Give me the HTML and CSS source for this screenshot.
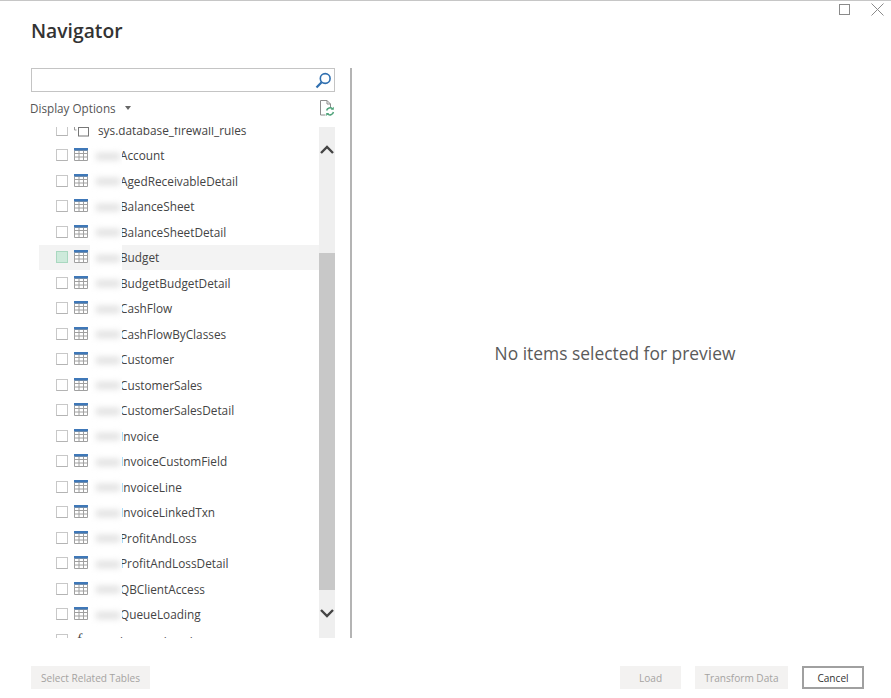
FILE: index.html
```html
<!DOCTYPE html>
<html lang="en">
<head>
<meta charset="utf-8">
<title>Navigator</title>
<link rel="stylesheet" href="styles.css">
</head>
<body>
<svg class="defs" width="0" height="0" aria-hidden="true">
  <symbol id="tbl" viewBox="0 0 14 13">
    <rect x="0" y="0" width="14" height="13" fill="#fff"/>
    <path d="M.5 2.500h13v10H.5z M.5 5.500h13 M.5 9h13 M5 2.500v10 M9.500 2.500v10" fill="none" stroke="#a0a0a0" stroke-width="1"/>
    <rect x="0" y="0" width="14" height="2.500" fill="#3f78b8"/>
  </symbol>
</svg>
<div class="window-controls">
  <svg class="ctl" width="11" height="11" viewBox="0 0 11 11"><rect x=".5" y=".5" width="10" height="10" fill="none" stroke="#8a8a8a"/></svg>
  <svg class="ctl" width="13" height="13" viewBox="0 0 13 13"><path d="M.5.5l12 12M12.500.5l-12 12" stroke="#8a8a8a" fill="none"/></svg>
</div>
<h1 class="title">Navigator</h1>
<main class="content">
  <section class="left">
    <div class="search">
      <svg width="17" height="17" viewBox="0 0 17 17"><circle cx="10.200" cy="6.500" r="4.900" fill="none" stroke="#2f6fb0" stroke-width="1.600"/><path d="M6.600 10.200L1.500 15.500" stroke="#2f6fb0" stroke-width="2.200" fill="none"/></svg>
    </div>
    <div class="options">
      <span class="options-label">Display Options</span>
      <span class="caret"></span>
      <svg class="refresh" width="16" height="17" viewBox="0 0 16 17"><path d="M1.500.5h6.500l3.500 3.500v4 M8 .5v3.500h3.500 M1.500.5v14.500h5" fill="none" stroke="#8c8c8c"/><path d="M7.600 10.500a3.500 3.500 0 0 1 6-1.500 M14.400 12a3.500 3.500 0 0 1-6 1.800" fill="none" stroke="#4fa37a" stroke-width="1.500"/><path d="M14.800 6.800v3h-3z M7.200 16v-3h3z" fill="#4fa37a"/></svg>
    </div>
    <div class="list-wrap">
      <div class="list">
        <div class="rows">
          <div class="row"><span class="check"></span><svg class="view-ic" width="16" height="14" viewBox="0 0 16 14"><path d="M.5 2v5h2" fill="none" stroke="#9a9a9a"/><rect x="4.500" y="4.500" width="10" height="8.500" fill="none" stroke="#777"/></svg><span class="name plain">sys.database_firewall_rules</span></div>
          <div class="row"><span class="check"></span><svg class="ic" width="14" height="13"><use href="#tbl"/></svg><span class="name">Account</span><span class="mask"><i></i></span></div>
          <div class="row"><span class="check"></span><svg class="ic" width="14" height="13"><use href="#tbl"/></svg><span class="name">AgedReceivableDetail</span><span class="mask"><i></i></span></div>
          <div class="row"><span class="check"></span><svg class="ic" width="14" height="13"><use href="#tbl"/></svg><span class="name">BalanceSheet</span><span class="mask"><i></i></span></div>
          <div class="row"><span class="check"></span><svg class="ic" width="14" height="13"><use href="#tbl"/></svg><span class="name">BalanceSheetDetail</span><span class="mask"><i></i></span></div>
          <div class="row hover"><span class="check on"></span><svg class="ic" width="14" height="13"><use href="#tbl"/></svg><span class="name">Budget</span><span class="mask"><i></i></span></div>
          <div class="row"><span class="check"></span><svg class="ic" width="14" height="13"><use href="#tbl"/></svg><span class="name">BudgetBudgetDetail</span><span class="mask"><i></i></span></div>
          <div class="row"><span class="check"></span><svg class="ic" width="14" height="13"><use href="#tbl"/></svg><span class="name">CashFlow</span><span class="mask"><i></i></span></div>
          <div class="row"><span class="check"></span><svg class="ic" width="14" height="13"><use href="#tbl"/></svg><span class="name">CashFlowByClasses</span><span class="mask"><i></i></span></div>
          <div class="row"><span class="check"></span><svg class="ic" width="14" height="13"><use href="#tbl"/></svg><span class="name">Customer</span><span class="mask"><i></i></span></div>
          <div class="row"><span class="check"></span><svg class="ic" width="14" height="13"><use href="#tbl"/></svg><span class="name">CustomerSales</span><span class="mask"><i></i></span></div>
          <div class="row"><span class="check"></span><svg class="ic" width="14" height="13"><use href="#tbl"/></svg><span class="name">CustomerSalesDetail</span><span class="mask"><i></i></span></div>
          <div class="row"><span class="check"></span><svg class="ic" width="14" height="13"><use href="#tbl"/></svg><span class="name">Invoice</span><span class="mask"><i></i></span></div>
          <div class="row"><span class="check"></span><svg class="ic" width="14" height="13"><use href="#tbl"/></svg><span class="name">InvoiceCustomField</span><span class="mask"><i></i></span></div>
          <div class="row"><span class="check"></span><svg class="ic" width="14" height="13"><use href="#tbl"/></svg><span class="name">InvoiceLine</span><span class="mask"><i></i></span></div>
          <div class="row"><span class="check"></span><svg class="ic" width="14" height="13"><use href="#tbl"/></svg><span class="name">InvoiceLinkedTxn</span><span class="mask"><i></i></span></div>
          <div class="row"><span class="check"></span><svg class="ic" width="14" height="13"><use href="#tbl"/></svg><span class="name">ProfitAndLoss</span><span class="mask"><i></i></span></div>
          <div class="row"><span class="check"></span><svg class="ic" width="14" height="13"><use href="#tbl"/></svg><span class="name">ProfitAndLossDetail</span><span class="mask"><i></i></span></div>
          <div class="row"><span class="check"></span><svg class="ic" width="14" height="13"><use href="#tbl"/></svg><span class="name">QBClientAccess</span><span class="mask"><i></i></span></div>
          <div class="row"><span class="check"></span><svg class="ic" width="14" height="13"><use href="#tbl"/></svg><span class="name">QueueLoading</span><span class="mask"><i></i></span></div>
          <div class="row last"><span class="check"></span><span class="fn">f</span><span class="name">impressions in</span></div>
        </div>
      </div>
      <div class="scrollbar">
        <div class="arrow"><svg width="14" height="9" viewBox="0 0 14 9"><path d="M1 8l6-6 6 6" fill="none" stroke="#444" stroke-width="2.400"/></svg></div>
        <div class="thumb"></div>
        <div class="arrow down"><svg width="14" height="9" viewBox="0 0 14 9"><path d="M1 1l6 6 6-6" fill="none" stroke="#444" stroke-width="2.400"/></svg></div>
      </div>
    </div>
  </section>
  <section class="preview">No items selected for preview</section>
</main>
<footer class="footer">
  <button class="btn disabled related">Select Related Tables</button>
  <span class="spacer"></span>
  <button class="btn disabled load">Load</button>
  <button class="btn disabled transform">Transform Data</button>
  <button class="btn cancel">Cancel</button>
</footer>
</body>
</html>
```
FILE: styles.css
```css
* { box-sizing: border-box; }
html, body { height: 100%; }
body {
  margin: 0;
  height: 698px;
  overflow: hidden;
  background: #fff;
  border-top: 1px solid #c6c6c6;
  font-family: "Open Sans", "Noto Sans", sans-serif;
  color: #444;
  display: flex;
  flex-direction: column;
  position: relative;
}
.defs { position: absolute; }
.window-controls {
  position: absolute;
  top: 2px;
  right: 7px;
  display: flex;
  align-items: center;
  gap: 21px;
}
.title {
  margin: 15px 0 0 31px;
  font-size: 19.300px;
  line-height: 29px;
  font-weight: 600;
  color: #333;
}
.content {
  display: flex;
  margin: 23px 0 0 31px;
  height: 570px;
}
.left {
  width: 304px;
  display: flex;
  flex-direction: column;
}
.search {
  height: 24px;
  border: 1px solid #c4c4c4;
  display: flex;
  align-items: center;
  justify-content: flex-end;
  padding-right: 2px;
}
.options {
  height: 31px;
  margin: 0 0 4px -1px;
  display: flex;
  align-items: center;
  font-size: 11.700px;
  color: #555;
}
.caret {
  margin-left: 9px;
  border-left: 3.500px solid transparent;
  border-right: 3.500px solid transparent;
  border-top: 4px solid #666;
}
.refresh { margin: 2px 0 0 auto; }
.list-wrap {
  flex: 1;
  display: flex;
  min-height: 0;
}
.list {
  flex: 1;
  overflow: hidden;
  padding-left: 8px;
}
.rows { margin-top: -10px; }
.row {
  height: 25.500px;
  display: flex;
  align-items: center;
  padding-left: 17px;
  position: relative;
  font-size: 11.800px;
}
.row.hover { background: #f3f3f3; }
.check {
  width: 12px;
  height: 12px;
  border: 1px solid #c8c8c8;
  border-bottom-color: #b4b4b4;
  background: #fff;
  flex: none;
}
.check.on { background: #cdeadb; border-color: #a9d8c0; }
.ic { margin: -1px 0 0 6px; flex: none; }
.view-ic { margin-left: 6px; flex: none; }
.fn {
  width: 14px;
  margin-left: 6px;
  padding-left: 3px;
  font-family: "Liberation Serif", serif;
  font-style: italic;
  font-size: 14px;
}
.name { margin-left: 32px; white-space: nowrap; color: #444; }
.name.plain { margin-left: 8px; }
.last .name { margin-top: 3px; }
.mask {
  position: absolute;
  left: 51px;
  top: 0;
  width: 32px;
  height: 26px;
  background: #fff;
  overflow: hidden;
}
.mask i {
  display: block;
  margin: 10px 0 0 6px;
  width: 24px;
  height: 7px;
  background: #e0e0e0;
  filter: blur(3px);
}
.scrollbar {
  width: 16px;
  background: #efefef;
  display: flex;
  flex-direction: column;
}
.arrow {
  height: 44px;
  display: flex;
  justify-content: center;
  align-items: center;
  flex: none;
}
.thumb {
  height: 337px;
  margin-top: 82px;
  background: #c8c8c8;
  flex: none;
}
.arrow.down { height: 47px; }
.preview {
  margin-left: 15px;
  flex: 1;
  border-left: 2px solid #b4b4b4;
  display: flex;
  align-items: center;
  justify-content: center;
  font-size: 17.400px;
  color: #5a5a5a;
  padding: 0 13px 0 0;
  height: 570px;
}
.footer {
  display: flex;
  margin: 28px 27px 0 31px;
  gap: 14px;
}
.spacer { flex: 1; }
.btn {
  height: 23px;
  padding: 0;
  border: 0;
  font-family: inherit;
  font-size: 10.100px;
}
.disabled { background: #f3f2f1; color: #a5a3a1; }
.related { width: 119px; }
.load { width: 61px; }
.transform { width: 93px; }
.cancel {
  width: 62px;
  background: #fff;
  border: 2px solid #a0a0a0;
  color: #333;
}
```
